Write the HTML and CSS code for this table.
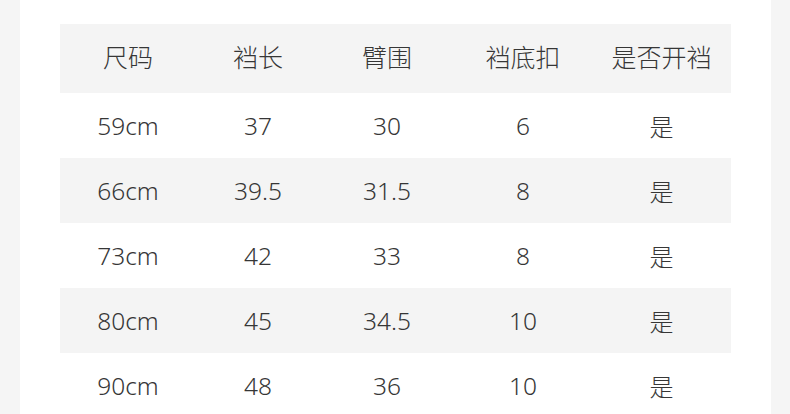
FILE: index.html
```html
<!DOCTYPE html>
<html lang="zh">
<head>
<meta charset="utf-8">
<link rel="stylesheet" href="styles.css">
</head>
<body>
<div class="page">
  <div class="panel">
    <div class="table">
      <div class="row head">
        <div class="cell">尺码</div><div class="cell">裆长</div><div class="cell">臂围</div><div class="cell">裆底扣</div><div class="cell">是否开裆</div>
      </div>
      <div class="row">
        <div class="cell">59cm</div><div class="cell">37</div><div class="cell">30</div><div class="cell">6</div><div class="cell cjk">是</div>
      </div>
      <div class="row alt">
        <div class="cell">66cm</div><div class="cell">39.5</div><div class="cell">31.5</div><div class="cell">8</div><div class="cell cjk">是</div>
      </div>
      <div class="row">
        <div class="cell">73cm</div><div class="cell">42</div><div class="cell">33</div><div class="cell">8</div><div class="cell cjk">是</div>
      </div>
      <div class="row alt">
        <div class="cell">80cm</div><div class="cell">45</div><div class="cell">34.5</div><div class="cell">10</div><div class="cell cjk">是</div>
      </div>
      <div class="row">
        <div class="cell">90cm</div><div class="cell">48</div><div class="cell">36</div><div class="cell">10</div><div class="cell cjk">是</div>
      </div>
    </div>
  </div>
</div>
</body>
</html>
```
FILE: styles.css
```css
html, body {
  margin: 0;
  padding: 0;
  background: #f5f5f5;
}
.page {
  width: 790px;
  height: 414px;
  overflow: hidden;
  display: flex;
  padding: 0 19px 0 20px;
  box-sizing: border-box;
}
.panel {
  flex: 1;
  background: #ffffff;
  padding: 24px 40px 0 40px;
}
.table {
  width: 671px;
  display: flex;
  flex-direction: column;
}
.row {
  display: grid;
  grid-template-columns: 136px 124px 134px 138px 139px;
  height: 65px;
  align-items: center;
  color: #363636;
  font-family: "Noto Sans", "Noto Sans CJK SC", sans-serif;
  font-size: 24.5px;
  font-weight: 300;
}
.row.head {
  height: 69px;
  background: #f4f4f4;
  font-family: "Noto Sans CJK SC", sans-serif;
  font-size: 25px;
  font-weight: 300;
}
.row.head .cell {
  padding-top: 0;
  padding-bottom: 4px;
}
.row.alt {
  background: #f4f4f4;
}
.cell {
  text-align: center;
  line-height: 1;
  padding-top: 1px;
}
.cell.cjk {
  font-family: "Noto Sans CJK SC", sans-serif;
  font-size: 24px;
  font-weight: 300;
}
```
